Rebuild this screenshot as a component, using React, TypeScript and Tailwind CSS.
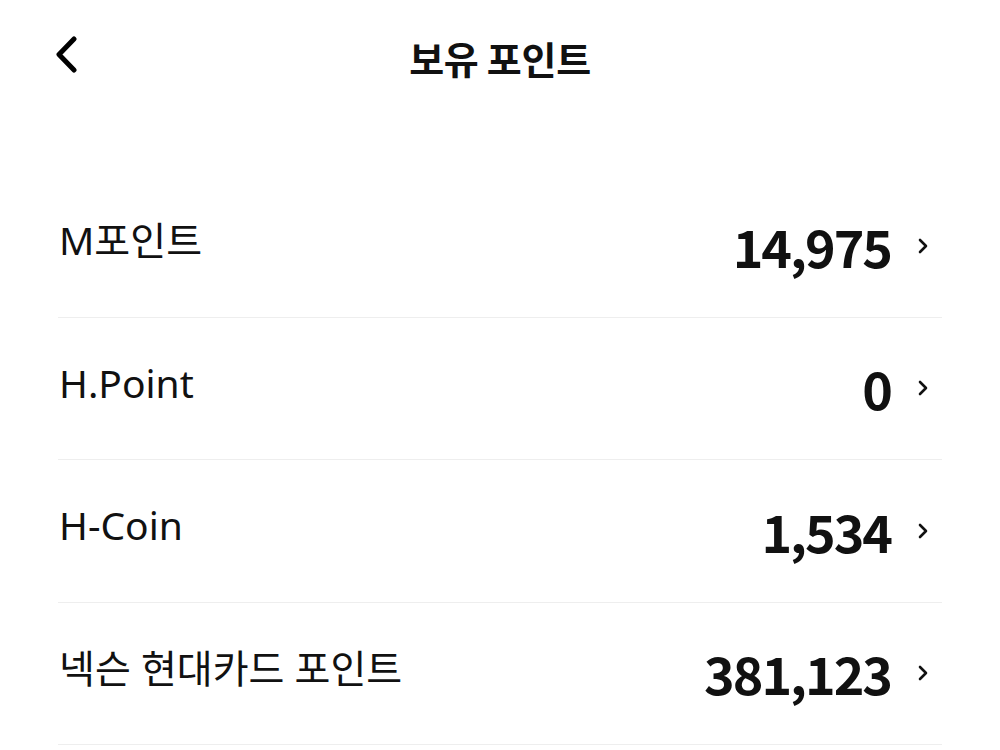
const points = [
  { label: 'M포인트', value: '14,975' },
  { label: 'H.Point', value: '0' },
  { label: 'H-Coin', value: '1,534' },
  { label: '넥슨 현대카드 포인트', value: '381,123' },
];

function ChevronSmall() {
  return (
    <svg width="12" height="18" viewBox="0 0 12 18" fill="none" className="shrink-0">
      <path d="M3 3 L9 9 L3 15" stroke="#111" strokeWidth="2.6" strokeLinecap="round" strokeLinejoin="round" />
    </svg>
  );
}

export default function App() {
  return (
    <div className="w-[1000px] h-[750px] bg-white overflow-hidden text-[#111] font-['Noto_Sans','Noto_Sans_CJK_KR',sans-serif]">
      <header className="relative h-[114px] flex items-center justify-center">
        <button className="absolute left-[50px] top-[32px] p-1">
          <svg width="26" height="40" viewBox="0 0 26 40" fill="none">
            <path d="M20 3 L5 18.5 L20 34" stroke="#000" strokeWidth="5" strokeLinecap="round" strokeLinejoin="round" />
          </svg>
        </button>
        <h1 className="text-[38px] font-bold tracking-[-0.3px] font-['Noto_Sans_CJK_KR',sans-serif]">보유 포인트</h1>
      </header>

      <div className="h-[61px]" />

      <ul className="mx-[58px]">
        {points.map((p) => (
          <li key={p.label} className="h-[142.5px] border-b-[1.5px] border-[#eeeeee] flex items-center pl-px">
            <span className="text-[39px] leading-none -mt-[12px]">{p.label}</span>
            <div className="ml-auto flex items-center gap-[26px] pr-[13px]">
              <span className="text-[52px] font-bold leading-none tracking-[-2px] font-['Noto_Sans_CJK_KR',sans-serif]">{p.value}</span>
              <ChevronSmall />
            </div>
          </li>
        ))}
      </ul>
    </div>
  );
}
